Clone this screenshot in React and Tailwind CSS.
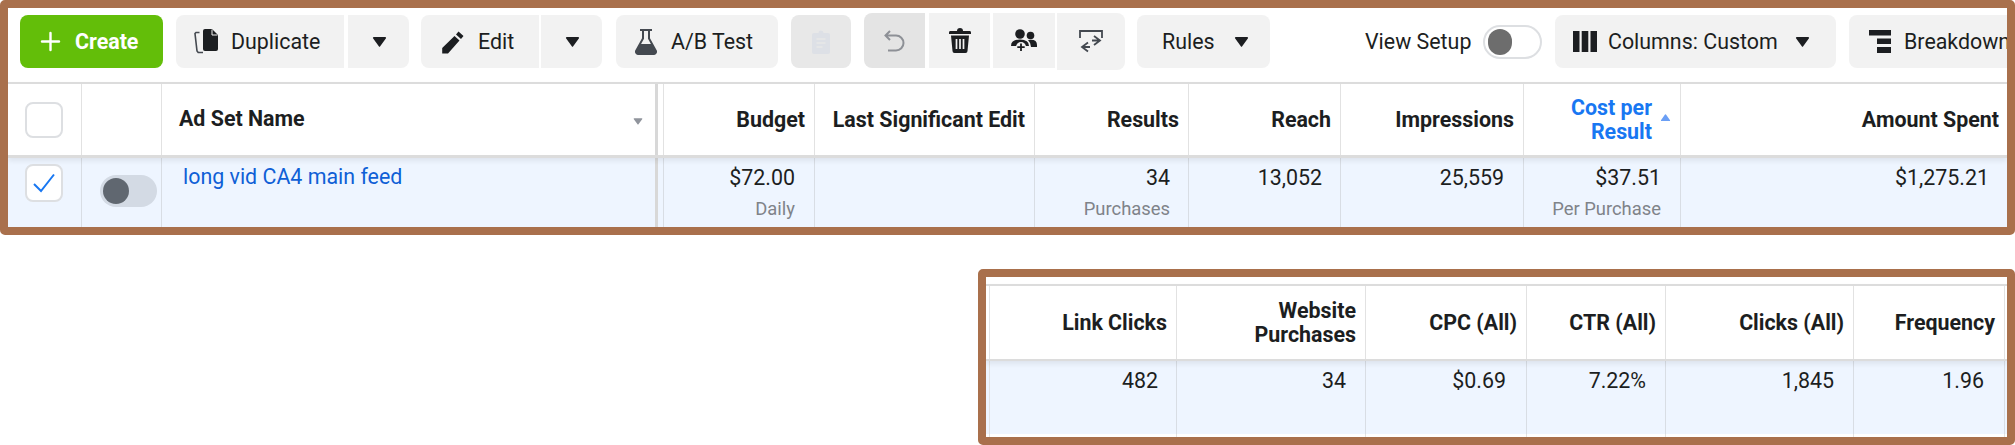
import React from "react";
import { Plus } from "lucide-react";

const Caret = ({ className = "w-[15px] h-[10px] text-[#1c1e21]" }) => (
  <svg viewBox="0 0 15 10" className={className}>
    <path d="M1 1.2Q.6 0 2 0h11q1.4 0 1 1.2L8.2 9.2q-.7 1-1.4 0z" fill="currentColor" />
  </svg>
);

const DuplicateIcon = () => (
  <svg viewBox="0 0 25 25" className="w-[25px] h-[25px] text-[#1c1e21]">
    <path d="M11 0h7l6 6v14a2 2 0 0 1-2 2H11a2 2 0 0 1-2-2V2a2 2 0 0 1 2-2z" fill="currentColor" />
    <path d="M5.500 3.500H2L1 4.500l2 17.500 1.200 1.500H9" fill="none" stroke="#444950" strokeWidth="1.600" />
    <path d="M18 .5v5.500h5.500" fill="none" stroke="#f2f2f2" strokeWidth="1" />
  </svg>
);

const PencilIcon = () => (
  <svg viewBox="0 0 24 24" className="w-[24px] h-[24px] text-[#1c1e21]">
    <path d="M17.500 1.500 22.500 6 20 9l-5-4.500zM13.500 6l5 4.500L7 23.500H1.200V18z" fill="currentColor" />
  </svg>
);

const FlaskIcon = () => (
  <svg viewBox="0 0 24 26" className="w-[24px] h-[26px]">
    <path d="M6 1h12M9 1.500v8L2 22a2.500 2.500 0 0 0 2 3h16a2.500 2.500 0 0 0 2-3L15 9.500v-8" fill="none" stroke="#444950" strokeWidth="2" />
    <path d="M5.500 15h13l3.500 7a2.500 2.500 0 0 1-2 3H4a2.500 2.500 0 0 1-2-3z" fill="#444950" />
  </svg>
);

const ClipboardIcon = () => (
  <svg viewBox="0 0 18 25" className="w-[18px] h-[25px]">
    <path d="M2 4h4.500a2.500 2.500 0 0 1 5 0H16a2 2 0 0 1 2 2v17a2 2 0 0 1-2 2H2a2 2 0 0 1-2-2V6a2 2 0 0 1 2-2z" fill="#dde0e6" />
    <path d="M4.500 10h9M4.500 14h9M4.500 18h6" stroke="#e8e8e8" strokeWidth="1.500" />
  </svg>
);

const UndoIcon = () => (
  <svg viewBox="0 0 21 22" className="w-[21px] h-[22px]">
    <path d="M6 1 1.500 5.500 6 10M2 5.500h10a7.500 7.500 0 0 1 0 15H4" fill="none" stroke="#8d9096" strokeWidth="2" />
  </svg>
);

const TrashIcon = () => (
  <svg viewBox="0 0 22 25" className="w-[22px] h-[25px] text-[#1c1e21]">
    <path d="M8 3q0-3 3-3t3 3h7q1 0 1 1.500V6H0V4.500Q0 3 1 3z" fill="currentColor" />
    <path d="M2 7.500h18L18.500 23a2 2 0 0 1-2 2h-11a2 2 0 0 1-2-2z" fill="currentColor" />
    <path d="M7.500 11v10M11 11v10M14.500 11v10" stroke="#f2f2f2" strokeWidth="1.700" />
  </svg>
);

const PeopleIcon = () => (
  <svg viewBox="0 0 26 23" className="w-[26px] h-[23px] text-[#1c1e21]">
    <circle cx="9" cy="5" r="4.800" fill="currentColor" />
    <circle cx="19.500" cy="6.500" r="3.800" fill="currentColor" />
    <path d="M0 17q0-6.500 9-6.500t9 6.500H0zM17 11q9-1.500 9 5v2h-6q0-4-3-7z" fill="currentColor" />
    <circle cx="10" cy="18" r="5" fill="#f2f2f2" />
    <path d="M10 14.500v7.500M6.300 18.200h7.400" stroke="currentColor" strokeWidth="1.800" />
  </svg>
);

const SwapIcon = () => (
  <svg viewBox="0 0 24 23" className="w-[24px] h-[23px]">
    <path d="M1 8V1h22v7" fill="none" stroke="#444950" strokeWidth="1.800" />
    <path d="M15 6l6 4.500-6 4.500M21 10.500h-8M9 12.500l-6 4.500 6 4.500M3 17h8" fill="none" stroke="#444950" strokeWidth="1.800" />
  </svg>
);

const ColumnsIcon = () => (
  <svg viewBox="0 0 24 21" className="w-[24px] h-[21px] text-[#1c1e21]">
    <path d="M0 0h6.500v21H0zM8.700 0h6.600v21H8.700zM17.500 0H24v21h-6.500z" fill="currentColor" />
  </svg>
);

const BreakdownIcon = () => (
  <svg viewBox="0 0 22 23" className="w-[22px] h-[23px] text-[#1c1e21]">
    <path d="M0 0h22v5.500H0zM8 8.500h14v5.500H8zM8 17h14v6H8z" fill="currentColor" />
  </svg>
);

const Group = ({ className, children }) => (
  <div className={`flex items-center shrink-0 text-[#1c1e21] ${className}`}>{children}</div>
);

const Label = ({ children }) => <span className="mt-[2px]">{children}</span>;

const Toolbar = () => (
  <div className="flex items-start h-[74px] pt-[7px] pl-[12px] text-[21.4px] overflow-hidden">
    <div className="flex items-center w-[143px] h-[53px] pl-[16px] bg-[#63be09] rounded-lg text-white font-bold shrink-0">
      <Plus className="w-[29px] h-[29px] mr-[10px]" strokeWidth={2} />
      <Label>Create</Label>
    </div>
    <Group className="w-[168px] h-[53px] ml-[13px] pl-[18px] gap-[12px] bg-[#f2f2f2] rounded-l-lg">
      <DuplicateIcon />
      <Label>Duplicate</Label>
    </Group>
    <Group className="w-[61px] h-[53px] ml-[4px] pl-[24px] bg-[#f2f2f2] rounded-r-lg"><Caret /></Group>
    <Group className="w-[118px] h-[53px] ml-[12px] pl-[20px] gap-[13px] bg-[#f2f2f2] rounded-l-lg">
      <PencilIcon />
      <Label>Edit</Label>
    </Group>
    <Group className="w-[61px] h-[53px] ml-[2px] pl-[24px] bg-[#f2f2f2] rounded-r-lg"><Caret /></Group>
    <Group className="w-[162px] h-[53px] ml-[14px] pl-[18px] gap-[13px] bg-[#f2f2f2] rounded-lg">
      <FlaskIcon />
      <Label>A/B Test</Label>
    </Group>
    <Group className="w-[60px] h-[53px] ml-[13px] justify-center bg-[#e8e8e8] rounded-lg"><ClipboardIcon /></Group>
    <Group className="w-[61px] h-[55px] ml-[13px] -mt-[2px] justify-center bg-[#e4e4e4] rounded-l-lg"><UndoIcon /></Group>
    <Group className="w-[61px] h-[55px] ml-[4px] -mt-[2px] justify-center bg-[#f2f2f2]"><TrashIcon /></Group>
    <Group className="w-[62px] h-[55px] ml-[3px] -mt-[2px] justify-center bg-[#f2f2f2]"><PeopleIcon /></Group>
    <Group className="w-[68px] h-[57px] ml-[2px] -mt-[2px] justify-center bg-[#f2f2f2] rounded-r-lg"><SwapIcon /></Group>
    <Group className="w-[133px] h-[53px] ml-[12px] pl-[25px] gap-[19px] bg-[#f2f2f2] rounded-lg">
      <Label>Rules</Label>
      <Caret />
    </Group>
    <div className="flex items-center h-[53px] ml-[95px] shrink-0 text-[#1c1e21]">
      <span className="w-[118px] mt-[2px]">View Setup</span>
      <div className="flex items-center w-[59px] h-[34px] pl-[3px] border-2 border-[#dddfe2] rounded-full bg-white">
        <div className="w-[24px] h-[26px] rounded-full bg-[#6d6d6d]" />
      </div>
    </div>
    <Group className="w-[281px] h-[53px] ml-[13px] pl-[18px] gap-[11px] bg-[#f2f2f2] rounded-lg">
      <ColumnsIcon />
      <Label>Columns: Custom</Label>
      <Caret className="w-[15px] h-[10px] ml-[6px] text-[#1c1e21]" />
    </Group>
    <Group className="w-[170px] h-[53px] ml-[13px] pl-[20px] gap-[13px] bg-[#f2f2f2] rounded-lg">
      <BreakdownIcon />
      <Label>Breakdown</Label>
    </Group>
  </div>
);

const Head = ({ className = "text-[#1c1e21]", children }) => (
  <div className={`flex items-center justify-end pr-[9px] border-r border-[#e2e2e2] text-right text-[21.4px] leading-[24px] font-bold ${className}`}>
    {children}
  </div>
);

const Cell = ({ value, sub, className = "pr-[19px]" }) => (
  <div className={`pt-[8px] border-r border-[#d8dde4] text-right text-[21.4px] leading-[24px] text-[#1c1e21] ${className}`}>
    <div>{value}</div>
    {sub && <div className="mt-[7px] text-[18.4px] text-[#7f8389]">{sub}</div>}
  </div>
);

const MainTable = () => (
  <div>
    <div className="relative z-10 grid grid-cols-[74px_80px_493px_9px_151px_220px_154px_152px_183px_157px_327px] h-[76px] border-t-2 border-b-[3px] border-[#dcdcdc] bg-white shadow-[0_3px_5px_rgba(0,0,0,0.07)]">
      <div className="flex items-center pl-[17px] border-r border-[#e2e2e2]">
        <div className="w-[38px] h-[36px] border-2 border-[#dddfe2] rounded-lg bg-white" />
      </div>
      <div className="border-r border-[#e2e2e2]" />
      <div className="flex items-center justify-between pl-[17px] pr-[12px] text-[21.4px] font-bold text-[#1c1e21]">
        Ad Set Name
        <Caret className="w-[10px] h-[7px] mt-[4px] text-[#90949c]" />
      </div>
      <div className="border-l-[3px] border-r border-l-[#d8d8d8] border-r-[#e2e2e2]" />
      <Head>Budget</Head>
      <Head>Last Significant Edit</Head>
      <Head>Results</Head>
      <Head>Reach</Head>
      <Head>Impressions</Head>
      <Head className="text-[#1877f2]">
        <span>Cost per<br />Result</span>
        <Caret className="w-[11px] h-[7px] ml-[8px] -mt-[4px] rotate-180 text-[#6b9ff5]" />
      </Head>
      <Head className="border-r-0 text-[#1c1e21]">Amount Spent</Head>
    </div>
    <div className="grid grid-cols-[74px_80px_493px_9px_151px_220px_154px_152px_183px_157px_327px] h-[69px] bg-[#eef5ff]">
      <div className="pl-[17px] pt-[6px] border-r border-[#d8dde4]">
        <div className="flex items-center justify-center w-[38px] h-[38px] border-2 border-[#dddfe2] rounded-lg bg-white">
          <svg viewBox="0 0 22 20" className="w-[22px] h-[20px]">
            <path d="M1 11l7 7L21 1.500" fill="none" stroke="#1877f2" strokeWidth="2" />
          </svg>
        </div>
      </div>
      <div className="pl-[18px] pt-[17px] border-r border-[#d8dde4]">
        <div className="flex items-center w-[57px] h-[32px] pl-[3px] rounded-full bg-[#d3dae4]">
          <div className="w-[26px] h-[26px] rounded-full bg-[#606770]" />
        </div>
      </div>
      <div className="pl-[21px] pt-[7px] text-[21.4px] leading-[24px] text-[#0f5fd6]">long vid CA4 main feed</div>
      <div className="border-l-[3px] border-r border-l-[#d8d8d8] border-r-[#d8dde4]" />
      <Cell value="$72.00" sub="Daily" />
      <Cell />
      <Cell value="34" sub="Purchases" className="pr-[18px]" />
      <Cell value="13,052" className="pr-[18px]" />
      <Cell value="25,559" />
      <Cell value="$37.51" sub="Per Purchase" />
      <Cell value="$1,275.21" className="pr-[19px] border-r-0" />
    </div>
  </div>
);

const SecondTable = () => (
  <div className="pt-[7px] bg-white">
    <div className="relative z-10 grid grid-cols-[4px_187px_189px_161px_139px_188px_151px_3px] h-[77px] border-t-2 border-b-2 border-[#dcdcdc] bg-white shadow-[0_3px_5px_rgba(0,0,0,0.07)]">
      <div className="border-r border-[#e2e2e2]" />
      <Head>Link Clicks</Head>
      <Head><span>Website<br />Purchases</span></Head>
      <Head>CPC (All)</Head>
      <Head>CTR (All)</Head>
      <Head>Clicks (All)</Head>
      <Head>Frequency</Head>
      <div />
    </div>
    <div className="grid grid-cols-[4px_187px_189px_161px_139px_188px_151px_3px] h-[73px] bg-[#eef5ff]">
      <div className="border-r border-[#e2e2e2]" />
      <Cell value="482" className="pr-[18px]" />
      <Cell value="34" className="pr-[19px]" />
      <Cell value="$0.69" className="pr-[20px]" />
      <Cell value="7.22%" className="pr-[19px]" />
      <Cell value="1,845" className="pr-[19px]" />
      <Cell value="1.96" className="pr-[20px]" />
      <div />
    </div>
    <div className="grid grid-cols-[4px_187px_189px_161px_139px_188px_151px_3px] h-[3px]">
      <div className="border-r border-[#e2e2e2]" />
      <div className="border-r border-[#e2e2e2]" />
      <div className="border-r border-[#e2e2e2]" />
      <div className="border-r border-[#e2e2e2]" />
      <div className="border-r border-[#e2e2e2]" />
      <div className="border-r border-[#e2e2e2]" />
      <div className="border-r border-[#e2e2e2]" />
      <div />
    </div>
  </div>
);

export default function App() {
  return (
    <div className="w-[2015px] h-[445px] bg-white overflow-hidden font-['Roboto',sans-serif]">
      <div className="h-[235px] border-8 border-[#a9704c] rounded-[5px] overflow-hidden bg-white box-border">
        <Toolbar />
        <MainTable />
      </div>
      <div className="ml-[978px] mt-[34px] h-[176px] border-8 border-[#a9704c] rounded-[5px] overflow-hidden box-border">
        <SecondTable />
      </div>
    </div>
  );
}
